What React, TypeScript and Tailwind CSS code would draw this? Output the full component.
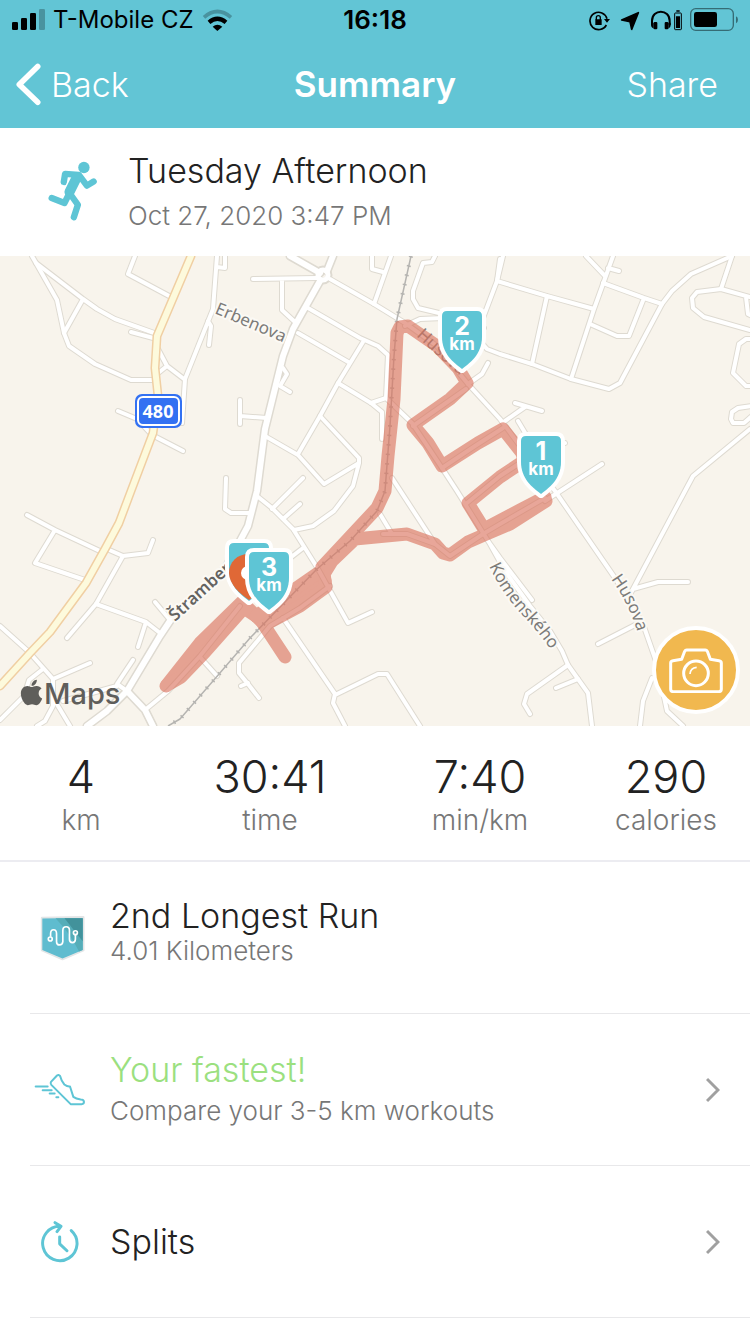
import type { ReactNode } from "react";
import { FaApple } from "react-icons/fa";

const wideRoads = [
  "M290 0 320 17M333 0 327 15",
  "M320 25 293 73 283 100 265 173 257 235 248 270 225 313 172 362 160 380 127 435 107 455 87 470",
  "M127 435 145 454 153 470",
];

const roads = [
  "M32 0 36 7 57 44 64 77 69 90 95 108 131 124H155",
  "M36 7 83 43 97 53 115 63 157 78M83 43 64 77",
  "M135 0 128 18 171 41M131 76 157 83M158 93 167 110 157 118M167 110 184 123",
  "M182 167 185 123 213 53 217 0M208 65 211 70 209 89M217 11 225 12V0",
  "M118 155 137 163 152 179 183 195M240 144V168M240 160 267 162",
  "M226 222 225 253 231 257H250",
  "M253 23 317 22M282 23V54L296 67M330 23 374 48 405 67 437 90 468 128 500 163 520 190 555 235 615 322 643 368 657 408 667 455 683 470",
  "M374 48 391 0M372 0V13L383 16",
  "M435 0 432 6 423 7 413 35V43L418 52 443 58 484 72M405 70 420 63 443 62H470",
  "M500 3 497 25 483 62 480 85 487 93 500 98 532 108 571 123 609 133 620 127 662 48 672 35 691 18 732 0",
  "M503 0 497 25 547 40 594 53M547 40 532 108M613 0 603 28 594 53 571 123M586 0 605 20M608 12 619 15",
  "M603 27 644 42 662 48M644 42 629 80H617L590 68M732 0 721 33",
  "M750 41 721 33 697 36 692 42 693 52 704 61 750 74M746 41 748 58 752 60",
  "M752 83H746L739 88 733 117 746 130H752M752 150 738 152 732 156 731 163 733 167H744L752 160",
  "M750 173 693 220 685 235 633 333 628 342M633 333 658 326H688M637 368 598 388",
  "M505 165 525 151M515 147 542 155M518 165 527 180M548 190 565 187M602 208 545 245",
  "M468 128 482 118 488 107M308 52 360 82 378 90 388 99 386 142 371 147M363 86 338 127 320 160 298 198M298 77 350 107",
  "M338 127 371 147 382 156V183M283 112 287 118 280 130 290 136",
  "M386 142 412 167 442 212 457 235 490 288 505 315 530 350 550 375 562 395 568 409 588 437 592 470M490 288 500 302 532 344",
  "M265 180 298 199 324 228 359 207V202L320 160M359 207 353 230 334 255 313 270 294 274",
  "M303 222 272 253M300 248 283 263M257 240 272 252 293 273 318 313 348 367 372 356M303 292 290 302",
  "M392 222 435 288M380 258 392 278M383 278H407L435 288 450 300 483 278 500 268 545 242",
  "M413 170 466 133M442 212 475 190 503 172M467 247 500 220 520 207",
  "M283 362 335 438 333 447 345 470M335 439 378 418H387L420 470",
  "M330 330 300 352 270 370 239 407V417L248 428 259 442M248 427 241 430",
  "M27 259 55 274 102 296M55 274 35 307 85 324M107 293 123 300 148 297 153 284M123 300 96 348 67 382",
  "M96 348 146 366 160 377M146 366 138 391M155 346 170 364M133 404 117 428 127 435M117 430 63 445",
  "M0 370 29 396 53 423V450L45 465 37 470M53 423 90 407M43 413 29 424 24 440 0 464M55 445 70 470",
  "M145 454 168 435 200 400 240 350M200 401 217 420",
  "M568 409 527 438 524 448 530 458M578 423 556 432M652 422 643 445 640 470",
];

const highway = "M191 0 157 80 155 112 158 140 153 177 131 235 119 267 105 293 86 327 50 376 30 397 0 430";
const railway = "M411 0 397 63 394 100 390 170 385 235 377 255 350 285 317 313 250 382 213 425 180 463 168 470";

function Roads() {
  return (
    <g fill="none" strokeLinecap="round" strokeLinejoin="round">
      {roads.map((d) => (
        <path key={d} d={d} stroke="#dedad1" strokeWidth="6" />
      ))}
      {wideRoads.map((d) => (
        <path key={d} d={d} stroke="#dedad1" strokeWidth="9" />
      ))}
      <circle cx="323" cy="19" r="6" stroke="#dedad1" strokeWidth="7" />
      {roads.map((d) => (
        <path key={d} d={d} stroke="#fff" strokeWidth="4" />
      ))}
      {wideRoads.map((d) => (
        <path key={d} d={d} stroke="#fff" strokeWidth="6" />
      ))}
      <circle cx="323" cy="19" r="5" stroke="#fff" strokeWidth="5" />
      <path d={railway} stroke="#b5b4b1" strokeWidth="1.5" strokeLinecap="butt" />
      <path d={railway} stroke="#b5b4b1" strokeWidth="4" strokeDasharray="1.5 8" strokeLinecap="butt" />
      <path d={highway} stroke="#f0cfa3" strokeWidth="9" />
      <path d={highway} stroke="#fdfadc" strokeWidth="6" />
    </g>
  );
}

function Route() {
  return (
    <g fill="none" stroke="#db735e" strokeWidth="13" strokeLinecap="round" strokeLinejoin="round" opacity="0.63">
      <path d="M166 430 200 387 242 346 262 366 285 401" />
      <path d="M167 429 181 421 205 396 244 352 256 360" />
      <path d="M262 366 280 354 325 325 322 311 350 281 377 252 385 235 388 200 394 143 397 77 400 71 408 70 437 90 458 112 467 127 450 143 413 169 428 187 442 210 478 187 503 173 522 197 524 205 500 221 468 247 484 273 520 254 545 241" />
      <path d="M546 245 510 268 484 279 468 286 450 299 443 297 435 288 407 278 355 283 332 305 324 318 326 331 300 350 270 366" />
      <path d="M256 360 318 317" />
    </g>
  );
}

function KmMarker({ x, y, label }: { x: number; y: number; label?: string }) {
  return (
    <g transform={`translate(${x} ${y})`}>
      <path
        d="M-20 5Q-20 0-15 0H15Q20 0 20 5V26C20 43 8 52 0 58-8 52-20 43-20 26Z"
        fill="#5ec5d5"
        stroke="#fff"
        strokeWidth="8"
        strokeLinejoin="round"
        paintOrder="stroke"
      />
      {label && (
        <text fill="#fff" textAnchor="middle" fontFamily="Inter, sans-serif" fontWeight="700">
          <tspan x="0" y="24" fontSize="25">{label}</tspan>
          <tspan x="0" y="39" fontSize="17">km</tspan>
        </text>
      )}
    </g>
  );
}

function RouteMap() {
  return (
    <section className="relative bg-[#f8f4ec]">
      <svg viewBox="0 0 750 470" className="block w-full" role="img" aria-label="Route map">
        <defs>
          <path id="stramberska" d="M175 366 230 316Q247 301 250 260" />
          <path id="komenskeho" d="M489 310Q502 338 525 362T566 418" />
          <path id="husova" d="M611 323Q633 353 641 390" />
        </defs>
        <Roads />
        <g
          fontFamily="Noto Sans, sans-serif"
          fontSize="17"
          fontWeight="400"
          fill="#7c7b79"
          stroke="#fbf9f4"
          strokeWidth="4"
          strokeLinejoin="round"
          paintOrder="stroke"
        >
          <text transform="translate(214 57) rotate(23)">Erbenova</text>
          <text transform="translate(416 80) rotate(42)" stroke="none">Husova</text>
          <text>
            <textPath href="#komenskeho">Komenského</textPath>
          </text>
          <text>
            <textPath href="#husova">Husova</textPath>
          </text>
          <text fill="#646361" fontWeight="600">
            <textPath href="#stramberska">Štramberská</textPath>
          </text>
        </g>
        <Route />
        <rect x="135" y="138" width="47" height="34" rx="7" fill="#3371f2" />
        <rect x="138" y="141" width="41" height="28" rx="5" fill="none" stroke="#fff" strokeWidth="2" />
        <text x="158" y="162" textAnchor="middle" fontFamily="Noto Sans, sans-serif" fontWeight="700" fontSize="18" fill="#fff">
          480
        </text>
        <KmMarker x={462} y={55} label="2" />
        <KmMarker x={541} y={180} label="1" />
        <KmMarker x={249} y={287} />
        <path d="M249 298C237 298 229 306 229 317S240 338 249 344C258 338 269 328 269 317S261 298 249 298Z" fill="#e06836" />
        <circle cx="248" cy="317" r="7" fill="#fff" />
        <KmMarker x={269} y={296} label="3" />
        <FaApple x="17" y="422" size={29} fill="#5f5e5b" />
        <text x="44" y="448" fontFamily="Inter, sans-serif" fontSize="29" fontWeight="500" fill="#5f5e5b">
          Maps
        </text>
      </svg>
      <button
        aria-label="Add photo"
        className="absolute right-2.5 bottom-3 flex size-[88px] items-center justify-center rounded-full border-4 border-white bg-[#f1b84f]"
      >
        <svg viewBox="506 460 168 140" className="w-14" fill="none" stroke="#fff" strokeWidth="9" strokeLinejoin="round">
          <path d="M521 501 547 497 556 473Q558 469 562 469H618Q622 469 624 473L633 497 659 501Q666 502 666 508V586Q666 594 658 594H522Q514 594 514 586V508Q514 502 521 501Z" />
          <circle cx="590" cy="539" r="37" />
          <path d="M572 541Q573 523 592 521" strokeWidth="5" />
        </svg>
      </button>
    </section>
  );
}

function StatusBar() {
  return (
    <div className="grid h-10 grid-cols-3 items-center px-3 text-2xl font-normal text-black">
      <div className="flex items-center gap-2">
        <svg viewBox="39 24 99 72" className="h-6 w-[33px] shrink-0">
          <rect x="39" y="66" width="18" height="24" rx="4" />
          <rect x="66" y="54" width="18" height="36" rx="4" />
          <rect x="93" y="39" width="18" height="51" rx="4" />
          <rect x="120" y="27" width="18" height="63" rx="4" opacity="0.25" />
        </svg>
        <span className="whitespace-nowrap">T-Mobile CZ</span>
        <svg viewBox="609 24 93 72" className="h-6 w-[31px] shrink-0" fill="none" stroke="#000" strokeWidth="11">
          <path d="M615 52Q655 17 696 52" opacity="0.25" />
          <path d="M630 67Q655 46 681 67" strokeWidth="13" />
          <path d="M655 93 641 80Q655 68 670 80Z" fill="#000" stroke="none" />
        </svg>
      </div>
      <span className="text-center text-[26px] font-semibold">16:18</span>
      <svg viewBox="645 24 447 72" className="h-6 w-[149px] justify-self-end">
        <g fill="none" stroke="#000" strokeWidth="5">
          <path d="M697 75A26 26 0 1 1 699 56" />
          <path d="M667 60V53Q667 47 673 47T679 53V60" strokeWidth="4" />
          <path d="M834 75V63C834 26 887 26 887 63V75" strokeWidth="6" />
          <rect x="902" y="39" width="20" height="50" rx="2" strokeWidth="3" />
        </g>
        <path d="M690 57H708L699 68ZM664 58H683V75H664Z" />
        <path d="M793 38 773 88 768 65 743 60Z" stroke="#000" strokeWidth="5" strokeLinejoin="round" />
        <rect x="839" y="66" width="11" height="22" rx="3" />
        <rect x="872" y="66" width="11" height="22" rx="3" />
        <path d="M831 68H839V86Q831 84 831 76ZM883 68H890V76Q890 84 883 86ZM907 31H917V35H907ZM906 49H918V84H906Z" />
        <rect x="950" y="26" width="128" height="65" rx="15" fill="none" stroke="#000" strokeWidth="4" opacity="0.45" />
        <rect x="960" y="36" width="69" height="45" rx="7" />
        <path d="M1086 49Q1092 52 1092 59T1086 70Z" opacity="0.45" />
      </svg>
    </div>
  );
}

const stats = [
  { value: "4", label: "km" },
  { value: "30:41", label: "time" },
  { value: "7:40", label: "min/km" },
  { value: "290", label: "calories" },
];

function Chevron() {
  return (
    <svg viewBox="0 0 14 26" className="mr-[30px] h-[26px] w-3.5 shrink-0" fill="none" stroke="#a0a0a0" strokeWidth="3">
      <path d="M1 2 12 13 1 24" />
    </svg>
  );
}

function Row({ icon, children, href }: { icon: ReactNode; children: ReactNode; href?: string }) {
  const content = (
    <>
      <div className="flex w-20 shrink-0 items-center pl-1">{icon}</div>
      <div className="grow">{children}</div>
      {href && <Chevron />}
    </>
  );
  const className = "ml-[30px] flex h-38 items-center border-b border-[#e8e8ea]";

  return href ? (
    <a href={href} className={className}>{content}</a>
  ) : (
    <div className={className}>{content}</div>
  );
}

export default function App() {
  return (
    <div className="min-h-screen bg-white font-['Inter',sans-serif] font-light text-[#222]">
      <header className="bg-[#62c5d5] text-white">
        <StatusBar />
        <nav className="grid h-22 grid-cols-3 items-center px-4 text-[34px]">
          <button className="flex items-center gap-2.5 justify-self-start">
            <svg viewBox="52 188 76 128" className="h-[43px] w-[25px]" fill="none" stroke="#fff" strokeWidth="17" strokeLinecap="round" strokeLinejoin="round">
              <path d="M118 197 62 252 118 306" />
            </svg>
            Back
          </button>
          <h1 className="text-center text-[35px] font-semibold">Summary</h1>
          <button className="mr-4 justify-self-end">Share</button>
        </nav>
      </header>

      <section className="flex h-32 items-center pb-0.5 pl-12">
        <svg viewBox="146 106 146 178" className="h-[60px] w-[49px] shrink-0" fill="none" stroke="#5ec5d5" strokeWidth="19" strokeLinecap="round" strokeLinejoin="round">
          <circle cx="253" cy="125" r="17" fill="#5ec5d5" stroke="none" />
          <path d="M193 168 197 144 238 147 262 179 282 167" />
          <path d="M230 158 210 198" strokeWidth="30" />
          <path d="M157 216 195 231 210 201 235 236 223 273" />
        </svg>
        <div className="pl-[31px]">
          <h2 className="text-[34px] leading-[50px]">Tuesday Afternoon</h2>
          <p className="text-[26px] leading-10 text-[#777]">Oct 27, 2020 3:47 PM</p>
        </div>
      </section>

      <RouteMap />

      <dl className="grid grid-cols-[27fr_36fr_34fr_28fr] border-b-2 border-[#ececf1] pt-[26px] pb-[22px] text-center">
        {stats.map((stat) => (
          <div key={stat.label} className="flex flex-col-reverse">
            <dt className="text-[28px] leading-9 text-[#777]">{stat.label}</dt>
            <dd className="text-[45px] leading-[50px]">{stat.value}</dd>
          </div>
        ))}
      </dl>

      <Row
        icon={
          <svg viewBox="58 74 136 138" className="ml-1.5 h-[46px] w-[45px]">
            <path d="M64 82 189 80V180L126 207 64 180Z" fill="#5fbccf" stroke="#e3e5e6" strokeWidth="7" strokeLinejoin="round" />
            <path d="M65 84 187 83V179L126 205 65 179Z" fill="#5fbccf" />
            <path d="M105 83H187V179L176 184Q150 130 105 83Z" fill="#55adb8" />
            <path d="M132 83H187V153Z" fill="#42929b" />
            <g fill="none" stroke="#fff" strokeWidth="5">
              <path d="M90 139V130Q90 118 99 118T108 130V154Q108 164 117 164T127 154V120Q127 109 137 109T147 120V147Q147 157 156 157T165 147V134" />
              <circle cx="89" cy="146" r="6" />
              <circle cx="165" cy="127" r="6" />
            </g>
          </svg>
        }
      >
        <h3 className="text-[34px] leading-[38px]">2nd Longest Run</h3>
        <p className="pb-3 text-[26px] leading-8 text-[#777]">4.01 Kilometers</p>
      </Row>

      <Row
        href="#compare"
        icon={
          <svg viewBox="42 102 156 98" className="h-[33px] w-[52px]" fill="none" stroke="#5ec5d5" strokeWidth="6" strokeLinecap="round" strokeLinejoin="round">
            <path d="M111 109 93 128Q90 132 94 137L152 195H185Q192 195 192 188 191 181 182 181 168 179 160 173L150 142Q142 143 133 136 124 126 120 110 116 105 111 109Z" />
            <path d="M47 142H83M68 153H95M89 163H104M109 174H115" />
          </svg>
        }
      >
        <h3 className="text-[34px] leading-[42px] text-[#9be07f]">Your fastest!</h3>
        <p className="text-[26px] leading-10 text-[#777]">Compare your 3-5 km workouts</p>
      </Row>

      <Row
        href="#splits"
        icon={
          <svg viewBox="62 542 120 130" className="ml-1.5 h-[43px] w-10" fill="none" stroke="#5ec5d5" strokeWidth="9" strokeLinecap="round" strokeLinejoin="round">
            <path d="M156 574A52 52 0 1 1 124 561M107 550 125 561 113 577M121 593V614L143 635" />
          </svg>
        }
      >
        <h3 className="text-[34px] leading-10">Splits</h3>
      </Row>
    </div>
  );
}
